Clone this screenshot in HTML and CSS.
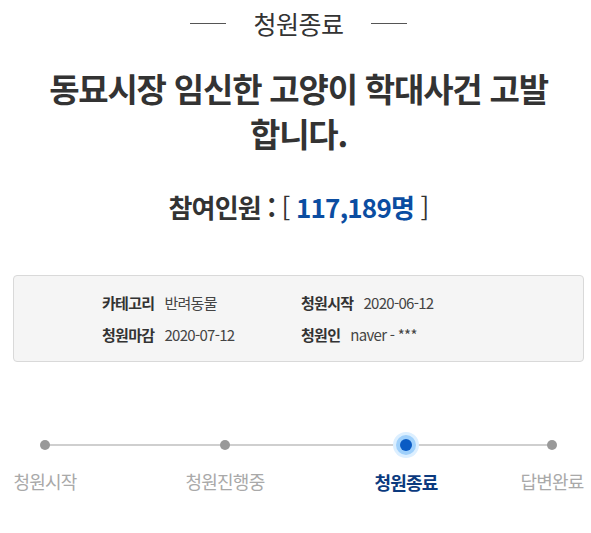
FILE: index.html
```html
<!DOCTYPE html>
<html lang="ko">
<head>
<meta charset="utf-8">
<link rel="stylesheet" href="styles.css">
</head>
<body>
<div class="page">
  <div class="status">
    <span class="dash"></span>
    <span class="status-text">청원종료</span>
    <span class="dash"></span>
  </div>
  <h1 class="title">동묘시장 임신한 고양이 학대사건 고발합니다.</h1>
  <div class="count">참여인원 : <span class="br">[</span> <span class="num">117,189명</span> <span class="br">]</span></div>
  <div class="info">
    <ul class="info-list">
      <li><b>카테고리</b><span>반려동물</span></li>
      <li><b>청원시작</b><span>2020-06-12</span></li>
      <li><b>청원마감</b><span>2020-07-12</span></li>
      <li><b>청원인</b><span>naver - ***</span></li>
    </ul>
  </div>
</div>
<div class="steps">
  <div class="track"></div>
  <div class="step s1"><i class="dot"></i><span class="label">청원시작</span></div>
  <div class="step s2"><i class="dot"></i><span class="label">청원진행중</span></div>
  <div class="step s3 on"><i class="dot"></i><span class="label">청원종료</span></div>
  <div class="step s4"><i class="dot"></i><span class="label">답변완료</span></div>
</div>
</body>
</html>
```
FILE: styles.css
```css
html, body { margin: 0; padding: 0; background: #fff; }
body {
  font-family: "Noto Sans CJK KR", "Noto Sans", sans-serif;
  color: #333;
}
.page { padding: 0 7px 0 13px; }
.status {
  display: flex;
  justify-content: center;
  align-items: center;
  gap: 27px;
  height: 46px;
}
.dash { width: 36px; height: 1px; background: #555; }
.status-text { font-size: 25px; letter-spacing: -0.5px; color: #333; line-height: 1; }
.title {
  margin: 20px 0 0;
  text-align: center;
  font-size: 33px;
  font-weight: 700;
  line-height: 45px;
  letter-spacing: -1.2px;
  padding: 0 28px;
}
.count {
  margin-top: 34px;
  text-align: center;
  font-size: 26px;
  font-weight: 700;
  letter-spacing: -0.8px;
  line-height: 34px;
}
.count .num { color: #0b4da1; }
.count .br { font-weight: 400; }
.info {
  margin-top: 51px;
  background: #f5f5f5;
  border: 1px solid #d9d9d9;
  border-radius: 4px;
  height: 87px;
  box-sizing: border-box;
}
.info-list {
  list-style: none;
  margin: 0;
  padding: 15px 0 0 88px;
  display: grid;
  grid-template-columns: 199px 199px;
  row-gap: 8px;
  font-size: 15px;
  letter-spacing: -0.7px;
  line-height: 24px;
}
.info-list b { font-weight: 700; color: #333; margin-right: 10px; }
.info-list span { color: #444; }
.steps {
  position: relative;
  display: flex;
  padding: 0 0 0 6px;
  margin-top: 69px;
}
.track {
  position: absolute;
  left: 43px;
  right: 39px;
  top: 13px;
  height: 2px;
  background: #cfcfcf;
}
.step {
  width: 78px;
  display: flex;
  flex-direction: column;
  align-items: center;
  position: relative;
}
.s2 { margin-left: 102px; }
.s3 { margin-left: 103px; }
.s4 { margin-left: 68px; }
.dot {
  display: block;
  width: 10px;
  height: 10px;
  margin-top: 9px;
  border-radius: 50%;
  background: #999;
}
.on .dot {
  width: 12px;
  height: 12px;
  margin-top: 8px;
  background: #0a5bc4;
  box-shadow: 0 0 0 4px #9fd0fb, 0 0 0 7px #dcefff;
}
.label {
  margin-top: 19px;
  font-size: 18px;
  letter-spacing: -0.8px;
  color: #a9a9a9;
  line-height: 24px;
  white-space: nowrap;
}
.on .label { color: #0b3a7e; font-weight: 700; }
```
